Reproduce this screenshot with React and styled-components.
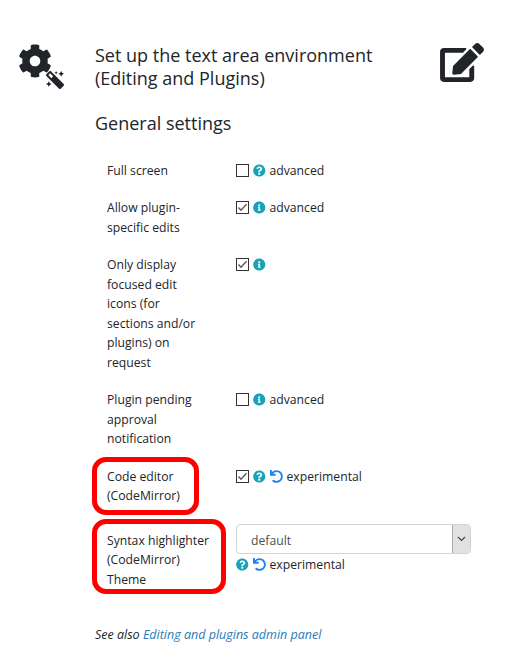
import React from "react";
import styled, { createGlobalStyle } from "styled-components";
import { FaCog, FaMagic, FaEdit, FaQuestionCircle, FaInfoCircle, FaUndo } from "react-icons/fa";

const Global = createGlobalStyle`
  html, body { margin: 0; background: #fff; }
  body { font-family: "Open Sans", "Noto Sans", sans-serif; color: #212529; font-size: 12.2px; line-height: 19.5px; }
`;
const Page = styled.div`
  width: 514px; height: 671px; padding: 44px 30px 0 0; box-sizing: border-box; overflow: hidden;
`;
const Header = styled.header`
  display: grid; grid-template-columns: 95px 1fr 44px; align-items: start;
`;
const GearIcon = styled.div`
  position: relative; width: 46px; height: 46px; margin-left: 18px;
  & > svg:first-child { width: 34px; height: 34px; display: block; }
`;
const Wand = styled(FaMagic)`
  position: absolute; left: 28px; top: 27px; width: 18px; height: 18px; transform: scaleX(-1);
`;
const Title = styled.h1`
  margin: 0; font-size: 18px; line-height: 23px; font-weight: 400;
`;
const EditIcon = styled(FaEdit)`
  width: 44px; height: 39px; margin-top: -1px; display: block;
`;
const Section = styled.h2`
  margin: 21px 0 0 95px; font-size: 18px; line-height: 24px; font-weight: 400;
`;
const Rows = styled.div`
  display: flex; flex-direction: column; gap: 18px; margin: 25.5px 0 0 107px;
`;
const Row = styled.div`
  display: grid; grid-template-columns: 129px 235px; margin-top: ${p => p.$extra || 0}px;
`;
const Label = styled.div`
  position: relative; width: fit-content; white-space: nowrap;
  ${p => p.$ring && `
    &::after {
      content: ""; position: absolute; left: -15px; right: ${p.$ring}px; top: ${p.$top}px; bottom: ${p.$bottom}px;
      border: 5px solid #f00; border-radius: 14px;
    }
  `}
`;
const Control = styled.div`
  display: flex; align-items: center; gap: 0 4px; height: 19.5px;
`;
const Box = styled.span`
  width: 13px; height: 13px; box-sizing: border-box; border: 1px solid #333; background: #fff;
  display: inline-flex; align-items: center; justify-content: center;
`;
const Tick = () => (
  <svg width="11" height="11" viewBox="0 0 11 11"><path d="M1.5 5.5 L4 8.2 L9.5 2.2" fill="none" stroke="#555" strokeWidth="1.3" /></svg>
);
const Help = styled(FaQuestionCircle)`width: 12.5px; height: 13px; color: #17a2b8;`;
const Info = styled(FaInfoCircle)`width: 12.5px; height: 13px; color: #17a2b8;`;
const Reset = styled(FaUndo)`width: 13px; height: 13px; color: #1f80f0;`;
const Stack = styled.div`display: flex; flex-direction: column; gap: 1px; margin-top: -7px;`;
const SelectBox = styled.div`
  width: 235px; height: 30px; box-sizing: border-box; border: 1px solid #ced4da; border-radius: 4px;
  display: flex; justify-content: space-between; align-items: stretch; color: #495057; overflow: hidden;
  font-size: 12.2px; line-height: 31px;
`;
const SelectText = styled.span`padding-left: 14px;`;
const Arrow = styled.span`
  width: 17px; background: #e1e1e1; border-left: 1px solid #aaa; display: flex; align-items: center; justify-content: center;
`;
const SeeAlso = styled.p`
  margin: 36px 0 0 95px; font-size: 12.5px; font-style: italic;
`;
const Link = styled.a`color: #2a7ab8; text-decoration: none;`;

const Check = ({ on }) => <Box>{on && <Tick />}</Box>;

export default function App() {
  return (
    <Page>
      <Global />
      <Header>
        <GearIcon><FaCog /><Wand /></GearIcon>
        <Title>Set up the text area environment<br />(Editing and Plugins)</Title>
        <EditIcon />
      </Header>
      <Section>General settings</Section>
      <Rows>
        <Row>
          <Label>Full screen</Label>
          <Control><Check /><Help /><span>advanced</span></Control>
        </Row>
        <Row>
          <Label>Allow plugin-<br />specific edits</Label>
          <Control><Check on /><Info /><span>advanced</span></Control>
        </Row>
        <Row>
          <Label>Only display<br />focused edit<br />icons (for<br />sections and/or<br />plugins) on<br />request</Label>
          <Control><Check on /><Info /></Control>
        </Row>
        <Row>
          <Label>Plugin pending<br />approval<br />notification</Label>
          <Control><Check /><Info /><span>advanced</span></Control>
        </Row>
        <Row>
          <Label $ring="-19" $top="-10" $bottom="-9">Code editor<br />(CodeMirror)</Label>
          <Control><Check on /><Help /><Reset /><span>experimental</span></Control>
        </Row>
        <Row $extra="7">
          <Label $ring="-17" $top="-12" $bottom="-5">Syntax highlighter<br />(CodeMirror)<br />Theme</Label>
          <Stack>
            <SelectBox>
              <SelectText>default</SelectText>
              <Arrow>
                <svg width="9" height="6" viewBox="0 0 9 6"><path d="M1 1 L4.5 4.5 L8 1" fill="none" stroke="#444" strokeWidth="1.2" /></svg>
              </Arrow>
            </SelectBox>
            <Control><Help /><Reset /><span>experimental</span></Control>
          </Stack>
        </Row>
      </Rows>
      <SeeAlso>See also <Link>Editing and plugins admin panel</Link></SeeAlso>
    </Page>
  );
}
